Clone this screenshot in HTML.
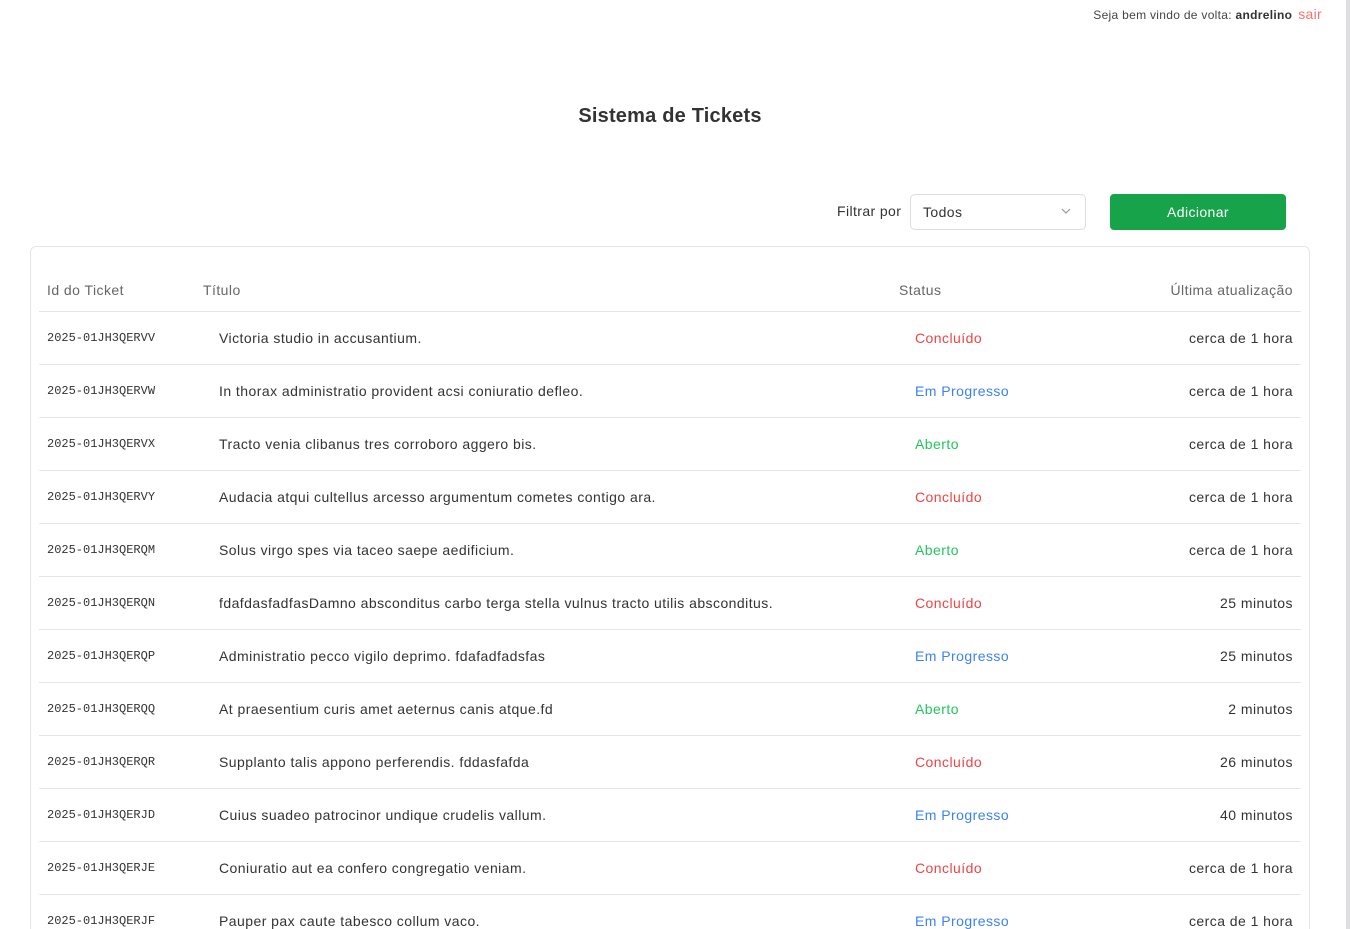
<!DOCTYPE html>
<html><head><meta charset="utf-8"><style>
*{box-sizing:border-box;margin:0;padding:0}
html,body{width:1350px;height:929px;overflow:hidden}
body{background:#fff;font-family:"Liberation Sans",sans-serif;color:#333;position:relative}
.sb{position:absolute;right:0;top:0;width:4px;height:929px;background:#dedee2}
.top{position:absolute;right:28px;top:6px;font-size:12px;color:#444;letter-spacing:0.3px}
.top b{color:#333}
.top .s{color:#f87171;font-size:14px;margin-left:6px}
h1{position:absolute;left:0;width:1340px;top:105px;text-align:center;font-size:20px;font-weight:bold;color:#333;letter-spacing:0.2px}
.fl{position:absolute;left:837px;top:203px;font-size:14px;color:#333;letter-spacing:0.4px}
.sel{position:absolute;left:910px;top:194px;width:176px;height:36px;border:1px solid #ddd;border-radius:5px;font-size:14px;padding:9px 12px;color:#333;letter-spacing:0.4px}
.sel svg{position:absolute;right:14px;top:13px}
.btn{position:absolute;left:1110px;top:194px;width:176px;height:36px;background:#16a34a;border-radius:4px;color:#fff;font-size:14px;text-align:center;line-height:36px;letter-spacing:0.4px}
.card{position:absolute;left:30px;top:246px;width:1280px;height:700px;border:1px solid #e5e5e5;border-radius:6px}
.row{position:absolute;left:39px;width:1262px;height:53px;border-bottom:1px solid #e5e5e5;font-size:14px;letter-spacing:0.45px}
.row span{position:absolute;top:50%;transform:translateY(-50%);white-space:nowrap}
.h{color:#666}
.id{left:8px;font-family:"Liberation Mono",monospace;font-size:12px;color:#333;letter-spacing:0}
.t{left:180px;color:#333}
.st{left:876px}
.u{right:8px;color:#333}
.c{color:#ef4444}.p{color:#3b82f6}.a{color:#22c55e}
</style></head><body>
<div class="sb"></div>
<div class="top">Seja bem vindo de volta: <b>andrelino</b><span class="s">sair</span></div>
<h1>Sistema de Tickets</h1>
<div class="fl">Filtrar por</div>
<div class="sel">Todos<svg width="10" height="6" viewBox="0 0 10 6"><path d="M1 1l4 4 4-4" stroke="#999" fill="none" stroke-width="1.2"/></svg></div>
<div class="btn">Adicionar</div>
<div class="card"></div>
<div class="row" style="top:259px"><span class="h" style="left:8px;top:31px">Id do Ticket</span><span class="h" style="left:164px;top:31px">Título</span><span class="h" style="left:860px;top:31px">Status</span><span class="h" style="right:8px;top:31px">Última atualização</span></div>
<div class="row" style="top:312px"><span class="id">2025-01JH3QERVV</span><span class="t">Victoria studio in accusantium.</span><span class="st c">Concluído</span><span class="u">cerca de 1 hora</span></div>
<div class="row" style="top:365px"><span class="id">2025-01JH3QERVW</span><span class="t">In thorax administratio provident acsi coniuratio defleo.</span><span class="st p">Em Progresso</span><span class="u">cerca de 1 hora</span></div>
<div class="row" style="top:418px"><span class="id">2025-01JH3QERVX</span><span class="t">Tracto venia clibanus tres corroboro aggero bis.</span><span class="st a">Aberto</span><span class="u">cerca de 1 hora</span></div>
<div class="row" style="top:471px"><span class="id">2025-01JH3QERVY</span><span class="t">Audacia atqui cultellus arcesso argumentum cometes contigo ara.</span><span class="st c">Concluído</span><span class="u">cerca de 1 hora</span></div>
<div class="row" style="top:524px"><span class="id">2025-01JH3QERQM</span><span class="t">Solus virgo spes via taceo saepe aedificium.</span><span class="st a">Aberto</span><span class="u">cerca de 1 hora</span></div>
<div class="row" style="top:577px"><span class="id">2025-01JH3QERQN</span><span class="t">fdafdasfadfasDamno absconditus carbo terga stella vulnus tracto utilis absconditus.</span><span class="st c">Concluído</span><span class="u">25 minutos</span></div>
<div class="row" style="top:630px"><span class="id">2025-01JH3QERQP</span><span class="t">Administratio pecco vigilo deprimo. fdafadfadsfas</span><span class="st p">Em Progresso</span><span class="u">25 minutos</span></div>
<div class="row" style="top:683px"><span class="id">2025-01JH3QERQQ</span><span class="t">At praesentium curis amet aeternus canis atque.fd</span><span class="st a">Aberto</span><span class="u">2 minutos</span></div>
<div class="row" style="top:736px"><span class="id">2025-01JH3QERQR</span><span class="t">Supplanto talis appono perferendis. fddasfafda</span><span class="st c">Concluído</span><span class="u">26 minutos</span></div>
<div class="row" style="top:789px"><span class="id">2025-01JH3QERJD</span><span class="t">Cuius suadeo patrocinor undique crudelis vallum.</span><span class="st p">Em Progresso</span><span class="u">40 minutos</span></div>
<div class="row" style="top:842px"><span class="id">2025-01JH3QERJE</span><span class="t">Coniuratio aut ea confero congregatio veniam.</span><span class="st c">Concluído</span><span class="u">cerca de 1 hora</span></div>
<div class="row" style="top:895px"><span class="id">2025-01JH3QERJF</span><span class="t">Pauper pax caute tabesco collum vaco.</span><span class="st p">Em Progresso</span><span class="u">cerca de 1 hora</span></div>
</body></html>
